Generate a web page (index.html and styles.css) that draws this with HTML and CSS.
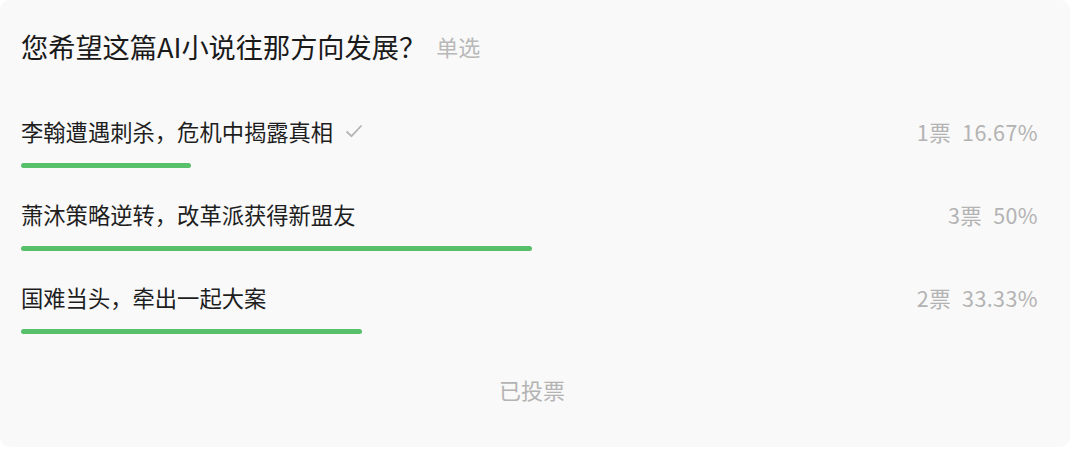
FILE: index.html
```html
<!DOCTYPE html>
<html lang="zh-CN">
<head>
<meta charset="utf-8">
<link rel="stylesheet" href="styles.css">
</head>
<body>
<div class="card">
  <div class="title">您希望这篇AI小说往那方向发展？<span class="tag">单选</span></div>
  <div class="options">
    <div class="option">
      <div class="row">
        <span class="label">李翰遭遇刺杀，危机中揭露真相<svg class="check" width="18" height="14" viewBox="0 0 18 14"><path d="M1.5 7.5 L6.5 12.2 L16.5 1.5" fill="none" stroke="#b5b5b5" stroke-width="1.8"/></svg></span>
        <span class="stat"><span class="votes">1票</span><span class="pct">16.67%</span></span>
      </div>
      <div class="track"><div class="bar" style="width:16.67%"></div></div>
    </div>
    <div class="option">
      <div class="row">
        <span class="label">萧沐策略逆转，改革派获得新盟友</span>
        <span class="stat"><span class="votes">3票</span><span class="pct">50%</span></span>
      </div>
      <div class="track"><div class="bar" style="width:50%"></div></div>
    </div>
    <div class="option">
      <div class="row">
        <span class="label">国难当头，牵出一起大案</span>
        <span class="stat"><span class="votes">2票</span><span class="pct">33.33%</span></span>
      </div>
      <div class="track"><div class="bar" style="width:33.33%"></div></div>
    </div>
  </div>
  <div class="voted">已投票</div>
</div>
</body>
</html>
```
FILE: styles.css
```css
html, body {
  margin: 0;
  padding: 0;
  background: #ffffff;
}
body {
  font-family: "Noto Sans CJK SC", "Noto Sans", sans-serif;
  width: 1080px;
  height: 461px;
  overflow: hidden;
}
.card {
  width: 1070px;
  height: 447px;
  box-sizing: border-box;
  background: #f9f9f9;
  border-radius: 10px;
  padding: 28px 27px 0 21px;
}
.title {
  font-size: 27.2px;
  line-height: 36px;
  color: #1a1a1a;
  display: flex;
  align-items: center;
}
.tag {
  font-size: 22px;
  color: #b8b8b8;
  margin-left: 10px;
}
.options {
  margin-top: 52px;
  display: flex;
  flex-direction: column;
  gap: 31px;
}
.row {
  display: flex;
  justify-content: space-between;
  align-items: center;
  height: 30px;
}
.label {
  font-size: 22.3px;
  color: #1e1e1e;
  display: flex;
  align-items: center;
}
.check {
  margin-left: 12px;
}
.stat {
  font-size: 21.5px;
  color: #b3b3b3;
  margin-right: 5px;
  display: flex;
  gap: 11px;
  letter-spacing: 0.4px;
}
.track {
  margin-top: 17px;
  height: 5px;
}
.bar {
  height: 5px;
  background: #58bf6b;
  border-radius: 3px;
}
.voted {
  margin-top: 40px;
  text-align: center;
  font-size: 22px;
  line-height: 30px;
  color: #b3b3b3;
}
```
